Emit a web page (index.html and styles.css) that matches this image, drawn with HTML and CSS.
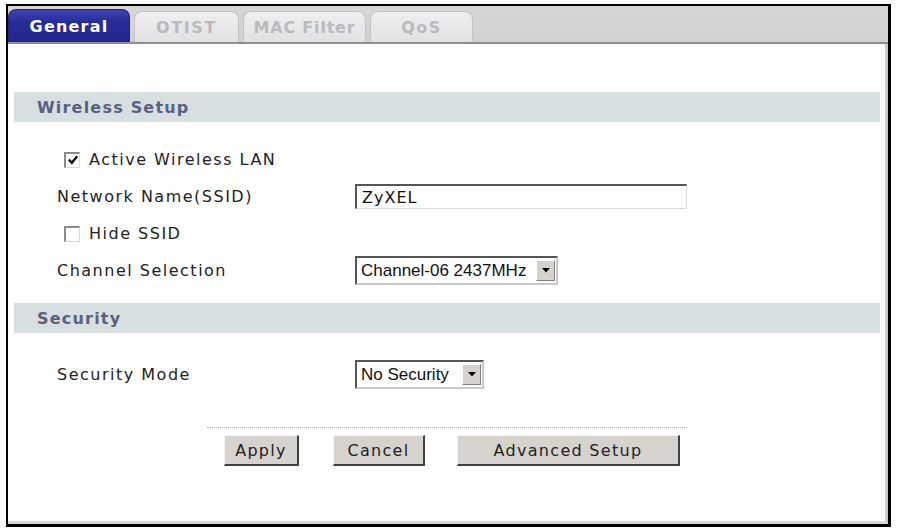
FILE: index.html
```html
<!DOCTYPE html>
<html>
<head>
<meta charset="utf-8">
<link rel="stylesheet" href="styles.css">
</head>
<body>
<div class="frame">
  <div class="tabbar">
    <div class="tab active">General</div>
    <div class="tab t-otist">OTIST</div>
    <div class="tab t-mac">MAC Filter</div>
    <div class="tab t-qos">QoS</div>
  </div>
  <div class="panel">
    <div class="section-head head-wireless">Wireless Setup</div>
    <div class="rows">
      <div class="row chk-row first"><span class="cb checked"><svg viewBox="0 0 12 12" width="12" height="12"><path d="M1.8 5.5 L4.8 8.8 L10.2 2.3" fill="none" stroke="#111" stroke-width="2.4"/></svg></span>Active Wireless LAN</div>
      <div class="row field-row"><span class="label">Network Name(SSID)</span><span class="input">ZyXEL</span></div>
      <div class="row chk-row"><span class="cb"></span>Hide SSID</div>
      <div class="row field-row"><span class="label">Channel Selection</span><span class="select sel-channel"><span class="sel-text">Channel-06 2437MHz</span><span class="sel-btn"><svg viewBox="0 0 8 5" width="8" height="5"><path d="M0 0 H8 L4 4.5 Z" fill="#000"/></svg></span></span></div>
    </div>
    <div class="section-head head-security">Security</div>
    <div class="rows sec-rows">
      <div class="row field-row"><span class="label">Security Mode</span><span class="select sel-sec"><span class="sel-text">No Security</span><span class="sel-btn"><svg viewBox="0 0 8 5" width="8" height="5"><path d="M0 0 H8 L4 4.5 Z" fill="#000"/></svg></span></span></div>
    </div>
    <div class="actions">
      <div class="dots"></div>
      <div class="buttons">
        <span class="btn b-apply">Apply</span>
        <span class="btn b-cancel">Cancel</span>
        <span class="btn b-adv">Advanced Setup</span>
      </div>
    </div>
  </div>
</div>
</body>
</html>
```

FILE: styles.css
```css
html, body {
  margin: 0;
  padding: 0;
  background: #fff;
}
body {
  padding: 4px 0 0 6px;
  font-family: "DejaVu Sans", Verdana, sans-serif;
  font-size: 16px;
  letter-spacing: 1.5px;
  color: #222;
}
.frame {
  width: 885px;
  height: 523px;
  border: 2px solid #000;
  border-right-width: 3px;
  border-bottom-width: 3px;
  box-sizing: border-box;
  display: flex;
  flex-direction: column;
  background: #fff;
}
.tabbar {
  height: 36px;
  background: linear-gradient(#d9d6da, #d3d0d4);
  display: flex;
  align-items: flex-end;
  border-bottom: 2px solid #8f8c93;
  gap: 4px;
}
.tab {
  height: 31px;
  box-sizing: border-box;
  border-radius: 8px 8px 0 0;
  background: linear-gradient(#f0eff0, #e1e0e2);
  border: 1px solid #c4c2c6;
  border-bottom: none;
  color: #bababd;
  font-weight: bold;
  font-size: 16px;
  letter-spacing: 0.8px;
  display: flex;
  align-items: center;
  justify-content: center;
}
.tab.active {
  background: linear-gradient(#3d42b0, #262b98 40%, #23288f);
  border-color: #1f2380;
  color: #fff;
  width: 122px;
  height: 33px;
  letter-spacing: 1.2px;
}
.t-otist { width: 105px; letter-spacing: 1.6px; }
.t-mac { width: 123px; }
.t-qos { width: 103px; letter-spacing: 1.4px; }
.panel {
  flex: 1;
  padding: 0 5px 0 6px;
  display: flex;
  flex-direction: column;
  border-right: 3px solid #c9c9cc;
  border-bottom: 3px solid #d8d8da;
}
.section-head {
  height: 30px;
  background: #d7dfe0;
  color: #5c6080;
  font-weight: bold;
  font-size: 16px;
  letter-spacing: 1.2px;
  display: flex;
  align-items: center;
  padding-left: 23px;
}
.head-wireless { margin-top: 48px; }
.head-security { margin-top: 14px; }
.rows {
  display: flex;
  flex-direction: column;
  padding-left: 43px;
  padding-top: 19px;
}
.row {
  height: 37px;
  display: flex;
  align-items: center;
  white-space: nowrap;
}
.chk-row {
  padding-left: 7px;
  height: 37px;
}
.cb {
  width: 16px;
  height: 16px;
  box-sizing: border-box;
  border: 2px solid #8a8a8a;
  border-right: 1px solid #dadada;
  border-bottom: 1px solid #dadada;
  background: #fff;
  margin-right: 9px;
  display: inline-flex;
  align-items: center;
  justify-content: center;
}
.cb svg { display: block; }
.label {
  width: 298px;
  flex: none;
}
.input {
  width: 332px;
  height: 25px;
  box-sizing: border-box;
  border: 2px solid #555;
  border-right: 1px solid #dcdcdc;
  border-bottom: 1px solid #dcdcdc;
  font-size: 16px;
  letter-spacing: 1px;
  padding-left: 5px;
  display: flex;
  align-items: center;
  color: #111;
}
.select {
  height: 29px;
  box-sizing: border-box;
  border: 2px solid #555;
  border-right: 2px solid #c8c8c8;
  border-bottom: 2px solid #c8c8c8;
  display: flex;
  align-items: stretch;
  font-family: "Liberation Sans", Arial, sans-serif;
  font-size: 17px;
  letter-spacing: 0;
  color: #111;
  background: #fff;
}
.sel-text {
  flex: 1;
  display: flex;
  align-items: center;
  padding-left: 4px;
}
.sel-btn {
  width: 17px;
  margin: 2px 1px 2px 0;
  background: #d6d3ce;
  border: 1px solid #fff;
  border-right-color: #808080;
  border-bottom-color: #808080;
  display: flex;
  align-items: center;
  justify-content: center;
}
.sel-btn svg { display: block; }
.sel-channel { width: 203px; }
.sel-sec { width: 129px; }
.sec-rows { padding-top: 23px; }
.actions {
  margin-top: 34px;
  display: flex;
  flex-direction: column;
  align-items: flex-start;
  padding-left: 193px;
}
.dots {
  width: 480px;
  border-top: 1px dotted #c8a0bf;
}
.buttons {
  display: flex;
  margin-top: 7px;
  padding-left: 17px;
}
.btn {
  height: 31px;
  box-sizing: border-box;
  background: #d6d3ce;
  border: 1px solid #f4f4f4;
  border-right: 2px solid #404040;
  border-bottom: 2px solid #404040;
  display: flex;
  align-items: center;
  justify-content: center;
  font-size: 16px;
  letter-spacing: 1.3px;
  color: #222;
}
.b-apply { width: 75px; }
.b-cancel { width: 92px; margin-left: 34px; }
.b-adv { width: 223px; margin-left: 32px; }
```
